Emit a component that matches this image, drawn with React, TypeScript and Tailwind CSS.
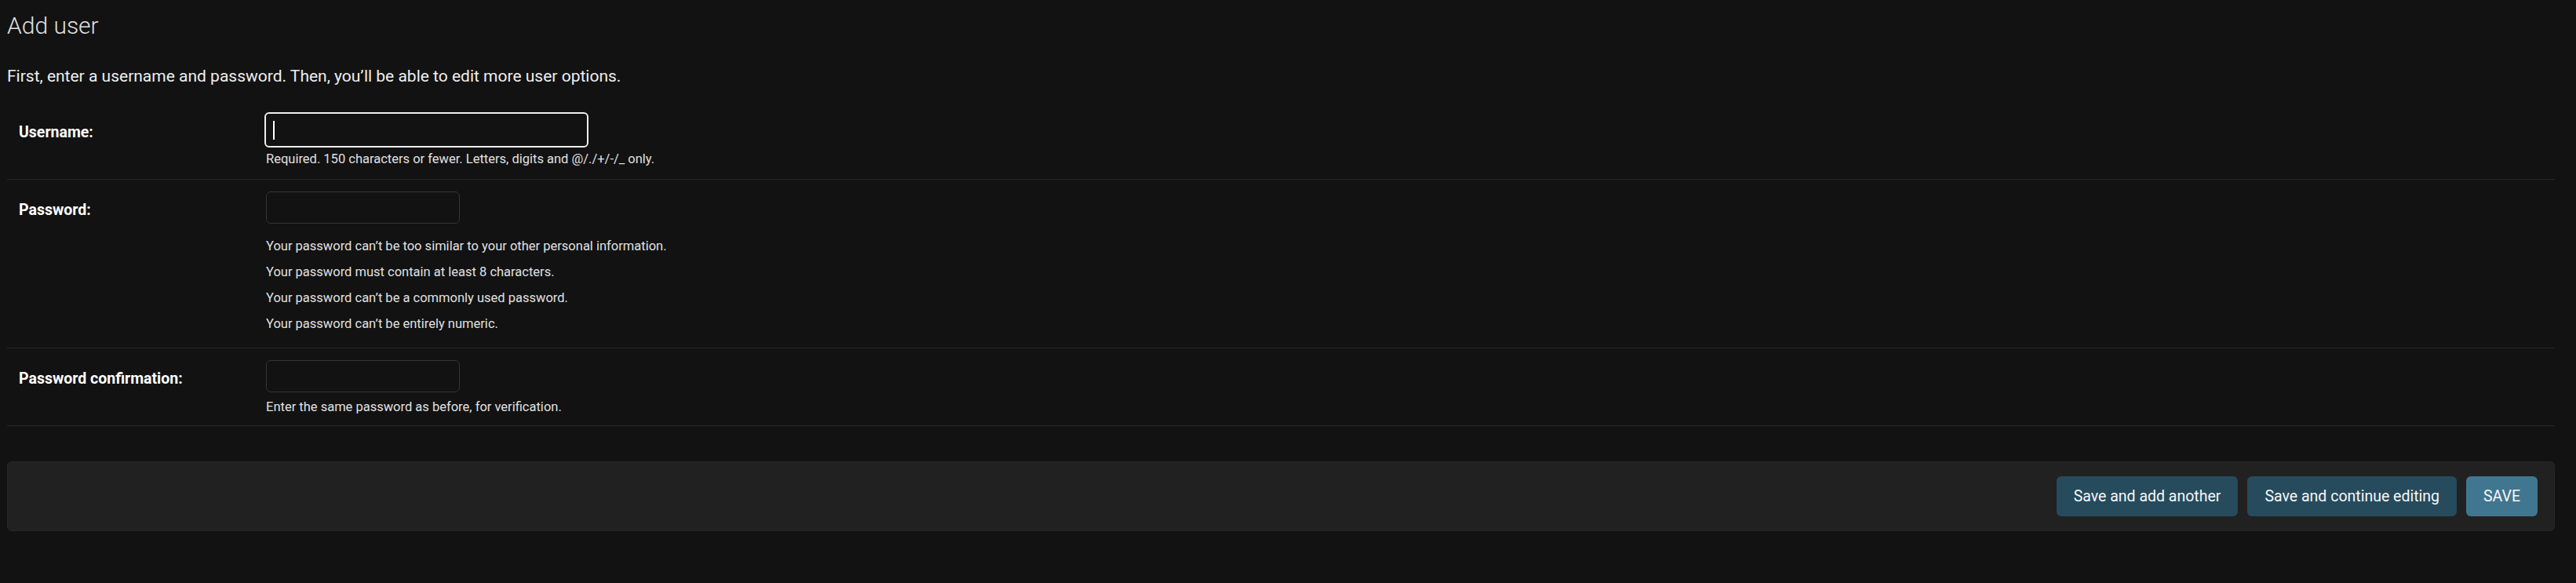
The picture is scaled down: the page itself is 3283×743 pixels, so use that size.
import React from "react";

const passwordHelp = [
  "Your password can’t be too similar to your other personal information.",
  "Your password must contain at least 8 characters.",
  "Your password can’t be a commonly used password.",
  "Your password can’t be entirely numeric.",
];

const FieldLabel = ({ text, top }: { text: string; top: string }) => (
  <label className={`w-[315px] shrink-0 text-[19.5px] font-bold leading-[22px] text-white ${top}`}>
    {text}
  </label>
);

const AddUserForm = () => {
  return (
    <div className="min-h-screen bg-[#121212] pl-[9px] pr-[27px] font-['Roboto',sans-serif] text-[#eeeeee]">
      <h1 className="pt-[15px] text-[30px] font-light leading-[36px] text-[#e0e0e0]">Add user</h1>
      <p className="mt-[30px] text-[21px] leading-[32px]">
        First, enter a username and password. Then, you’ll be able to edit more user options.
      </p>

      <fieldset className="mt-[15px]">
        {/* username */}
        <div className="flex border-b border-[#272727] px-[15px] pt-[15px] pb-[14px]">
          <FieldLabel text="Username:" top="mt-[15px]" />
          <div className="flex flex-col">
            <div className="relative -ml-[2px]">
              <input
                type="text"
                readOnly
                className="h-[45px] w-[413px] rounded-[6px] border-2 border-[#eeeeee] bg-[#121212] px-[9px] outline-none"
              />
              <span className="absolute left-[11px] top-[11px] h-[24px] w-[2px] bg-white" />
            </div>
            <div className="mt-[4px] text-[16.5px] leading-[22px] text-[#e0e0e0]">
              Required. 150 characters or fewer. Letters, digits and @/./+/-/_ only.
            </div>
          </div>
        </div>

        {/* password */}
        <div className="flex border-b border-[#272727] px-[15px] pt-[15px] pb-[14px]">
          <FieldLabel text="Password:" top="mt-[13px]" />
          <div className="flex flex-col">
            <input
              type="password"
              readOnly
              className="h-[41px] w-[247px] rounded-[6px] border border-[#353535] bg-[#121212] outline-none"
            />
            <ul className="mt-[12px] text-[16.5px] leading-[33px] text-[#e0e0e0]">
              {passwordHelp.map((line) => (
                <li key={line}>{line}</li>
              ))}
            </ul>
          </div>
        </div>

        {/* confirmation */}
        <div className="flex border-b border-[#272727] px-[15px] pt-[15px] pb-[12px]">
          <FieldLabel text="Password confirmation:" top="mt-[13px]" />
          <div className="flex flex-col">
            <input
              type="password"
              readOnly
              className="h-[41px] w-[247px] rounded-[6px] border border-[#353535] bg-[#121212] outline-none"
            />
            <div className="mt-[8px] text-[16.5px] leading-[22px] text-[#e0e0e0]">
              Enter the same password as before, for verification.
            </div>
          </div>
        </div>
      </fieldset>

      <div className="mt-[45px] flex justify-end gap-[12px] rounded-[6px] border border-[#272727] bg-[#212121] px-[21px] py-[18px]">
        <button className="h-[51px] rounded-[6px] bg-[#264b5d] px-[22px] text-[19.5px] text-[#f7f7f7]">
          Save and add another
        </button>
        <button className="h-[51px] rounded-[6px] bg-[#264b5d] px-[22px] text-[19.5px] text-[#f7f7f7]">
          Save and continue editing
        </button>
        <button className="h-[51px] rounded-[6px] bg-[#417690] px-[22px] text-[19.5px] uppercase text-[#f7f7f7]">
          Save
        </button>
      </div>
    </div>
  );
};

export default function App() {
  return <AddUserForm />;
}
